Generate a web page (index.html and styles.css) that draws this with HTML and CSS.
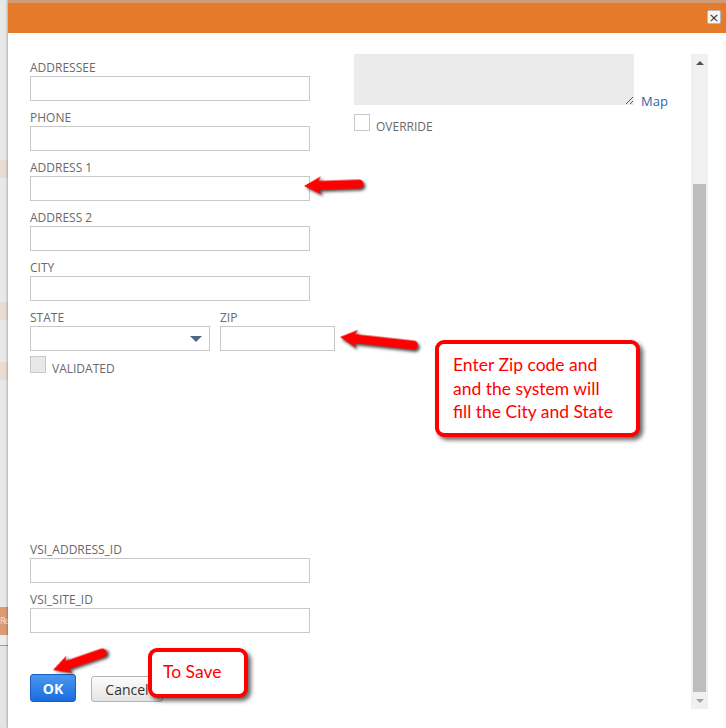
FILE: index.html
```html
<!DOCTYPE html>
<html lang="en">

<head>
    <meta charset="UTF-8">
    <title>Address</title>
    <link rel="stylesheet" href="styles.css">
</head>

<body>
    <div class="screen">
        <div class="behind">
            <div class="strip" style="height: 160px"></div>
            <div class="strip tan"></div>
            <div class="strip" style="height: 124px"></div>
            <div class="strip tan"></div>
            <div class="strip" style="height: 42px"></div>
            <div class="strip tan"></div>
            <div class="strip" style="height: 227px"></div>
            <div class="strip orange">Re</div>
            <div class="strip low"></div>
        </div>

        <div class="dialog">
            <div class="dialog-head">
                <button class="close">&#215;</button>
            </div>

            <div class="dialog-body">
                <div class="form">
                    <div class="col-left">
                        <div class="field">
                            <label>ADDRESSEE</label>
                            <input type="text">
                        </div>
                        <div class="field">
                            <label>PHONE</label>
                            <input type="text">
                        </div>
                        <div class="field">
                            <label>ADDRESS 1</label>
                            <input type="text">
                        </div>
                        <div class="field">
                            <label>ADDRESS 2</label>
                            <input type="text">
                        </div>
                        <div class="field">
                            <label>CITY</label>
                            <input type="text">
                        </div>
                        <div class="state-row">
                            <div class="field state">
                                <label>STATE</label>
                                <div class="select"><span class="caret"></span></div>
                            </div>
                            <div class="field zip">
                                <label>ZIP</label>
                                <input type="text">
                            </div>
                        </div>
                        <div class="check validated">
                            <span class="box filled"></span>
                            <span class="check-text">VALIDATED</span>
                        </div>

                        <div class="field vsi">
                            <label>VSI_ADDRESS_ID</label>
                            <input type="text">
                        </div>
                        <div class="field">
                            <label>VSI_SITE_ID</label>
                            <input type="text">
                        </div>

                        <div class="buttons">
                            <button class="btn ok">OK</button>
                            <button class="btn cancel">Cancel</button>
                        </div>
                    </div>

                    <div class="col-right">
                        <div class="addr-row">
                            <div class="textarea">
                                <svg class="grip" width="8" height="8" viewBox="0 0 8 8">
                                    <path d="M1 8 L8 1 M5 8 L8 5" stroke="#555" stroke-width="1" />
                                </svg>
                            </div>
                            <a class="map">Map</a>
                        </div>
                        <div class="check override">
                            <span class="box"></span>
                            <span class="check-text">OVERRIDE</span>
                        </div>
                    </div>
                </div>

                <div class="scrollbar">
                    <div class="sb-btn"><span class="tri up"></span></div>
                    <div class="sb-track"><div class="sb-thumb"></div></div>
                    <div class="sb-btn"><span class="tri down"></span></div>
                </div>
            </div>
        </div>
    </div>

    <!-- annotation arrows -->
    <svg class="arrows" width="726" height="728" viewBox="0 0 726 728">
        <g transform="translate(304 186) rotate(-2)">
            <path d="M0 0 L17 -9 L15 -4.5 L55 -4.5 A4.5 4.5 0 0 1 55 4.5 L15 4.5 L17 9 Z" />
        </g>
        <g transform="translate(340 337) rotate(6.3)">
            <path d="M0 0 L17 -9 L15 -4.5 L74 -4.5 A4.5 4.5 0 0 1 74 4.5 L15 4.5 L17 9 Z" />
        </g>
        <g transform="translate(53 670) rotate(-19)">
            <path d="M0 0 L17 -9 L15 -4.5 L52 -4.5 A4.5 4.5 0 0 1 52 4.5 L15 4.5 L17 9 Z" />
        </g>
    </svg>

    <div class="callout zip-note">Enter Zip code and<br>and the system will<br>fill the City and State</div>
    <div class="callout save-note">To Save</div>
</body>

</html>
```

FILE: styles.css
```css
body {
    margin: 0;
    font-family: 'Open Sans', sans-serif;
    background: #fff;
    width: 726px;
    height: 728px;
    overflow: hidden;
}

.screen {
    display: flex;
    height: 728px;
}

/* page peeking out behind the dialog */
.behind {
    width: 8px;
    flex-shrink: 0;
    background: #e8e8e8;
    overflow: hidden;
}

.strip {
    height: 18px;
    background: #e8e8e8;
}

.strip.tan {
    background: #e8dcd3;
}

.strip.orange {
    height: 28px;
    background: #dc9a72;
    color: #f6e4d8;
    font-size: 9px;
    letter-spacing: -1px;
    line-height: 28px;
    white-space: nowrap;
}

.strip.low {
    height: 120px;
    background: #e4e4e4;
    border-top: 10px solid #ececec;
    box-shadow: inset 0 10px 0 -9px #8d9bb0, inset 0 48px 0 -47px #8d9bb0;
}

.dialog {
    flex: 1;
    background: #fff;
    box-shadow: -1px 0 2px rgba(0, 0, 0, 0.25);
}

.dialog-head {
    height: 30px;
    border-top: 3px solid #cf9a74;
    background: #e67a2b;
    display: flex;
    justify-content: flex-end;
    align-items: flex-start;
    padding-right: 5px;
}

.close {
    margin-top: 7px;
    width: 14px;
    height: 14px;
    padding: 0;
    border: 1px solid #b9b9b9;
    border-radius: 2px;
    background: #f5f5f5;
    color: #333;
    font-size: 13px;
    line-height: 11px;
    font-family: 'DejaVu Sans', sans-serif;
}

.dialog-body {
    display: flex;
    height: 695px;
}

.form {
    flex: 1;
    display: flex;
    padding: 21px 0 0 22px;
}

.col-left {
    width: 280px;
    padding-top: 6px;
}

.col-right {
    margin-left: 44px;
}

.field label {
    display: block;
    font-size: 12px;
    line-height: 16px;
    color: #6a6a6a;
}

.field input,
.select {
    display: block;
    box-sizing: border-box;
    width: 280px;
    height: 25px;
    margin: 0 0 9px 0;
    border: 1px solid #c8c8c8;
    background: #fff;
}

.state-row {
    display: flex;
    gap: 10px;
}

.state .select {
    width: 180px;
    margin-bottom: 0;
    display: flex;
    justify-content: flex-end;
    align-items: center;
    padding-right: 7px;
}

.caret {
    width: 0;
    height: 0;
    border-left: 6px solid transparent;
    border-right: 6px solid transparent;
    border-top: 6px solid #4f6787;
}

.zip input {
    width: 115px;
    margin-bottom: 0;
}

.check {
    display: flex;
    align-items: flex-end;
    gap: 6px;
    font-size: 12px;
    line-height: 13px;
    color: #6a6a6a;
}

.check-text {
    margin-bottom: -2px;
}

.box {
    box-sizing: border-box;
    width: 16px;
    height: 17px;
    border: 1px solid #c8c8c8;
    background: #fff;
}

.box.filled {
    background: #e8e8e8;
}

.validated {
    margin-top: 5px;
}

.vsi {
    margin-top: 169px;
}

.buttons {
    display: flex;
    align-items: center;
    gap: 15px;
    margin-top: 41px;
}

.btn {
    font-family: 'Open Sans', sans-serif;
    font-size: 14px;
    border-radius: 3px;
    padding: 0;
}

.ok {
    width: 46px;
    height: 28px;
    color: #fff;
    font-weight: bold;
    border: 1px solid #1a5fbf;
    background: linear-gradient(#4a97f2, #1a6cdc);
}

.cancel {
    width: 72px;
    height: 26px;
    margin-top: 2px;
    color: #333;
    border: 1px solid #b4b4b4;
    background: linear-gradient(#fdfdfd, #e4e4e4);
}

.addr-row {
    display: flex;
    align-items: flex-end;
    gap: 7px;
}

.textarea {
    width: 280px;
    height: 51px;
    background: #ebebeb;
    display: flex;
    justify-content: flex-end;
    align-items: flex-end;
}

.grip {
    margin: 0 1px 1px 0;
}

.map {
    font-size: 13px;
    line-height: 15px;
    color: #2f66a8;
    margin-bottom: -4px;
}

.override {
    margin-top: 9px;
}

.scrollbar {
    width: 17px;
    height: 655px;
    margin: 21px 18px 0 0;
    background: #f0f0f0;
    display: flex;
    flex-direction: column;
}

.sb-btn {
    height: 17px;
    display: flex;
    justify-content: center;
    align-items: center;
}

.tri {
    width: 0;
    height: 0;
    border-left: 4px solid transparent;
    border-right: 4px solid transparent;
}

.tri.up {
    border-bottom: 4px solid #505050;
}

.tri.down {
    border-top: 4px solid #a3a3a3;
}

.sb-track {
    flex: 1;
    display: flex;
    padding: 113px 2px 0 2px;
}

.sb-thumb {
    flex: 1;
    background: #bdbdbd;
}

/* annotations drawn over the screenshot */
.arrows {
    position: absolute;
    top: 0;
    left: 0;
    pointer-events: none;
}

.arrows path {
    fill: #ff0000;
    filter: drop-shadow(2px 2px 1.5px rgba(0, 0, 0, 0.7));
}

.callout {
    position: absolute;
    box-sizing: border-box;
    border: 4px solid #ff0000;
    border-radius: 9px;
    background: #fff;
    box-shadow: 3px 3px 4px rgba(0, 0, 0, 0.6);
    font-family: 'Lato', sans-serif;
    font-size: 17.5px;
    line-height: 23.5px;
    color: #ff0000;
}

.zip-note {
    left: 435px;
    top: 340px;
    width: 205px;
    height: 97px;
    padding: 9px 0 0 14px;
}

.save-note {
    left: 148px;
    top: 648px;
    width: 100px;
    height: 50px;
    padding: 8px 0 0 11px;
}
```
